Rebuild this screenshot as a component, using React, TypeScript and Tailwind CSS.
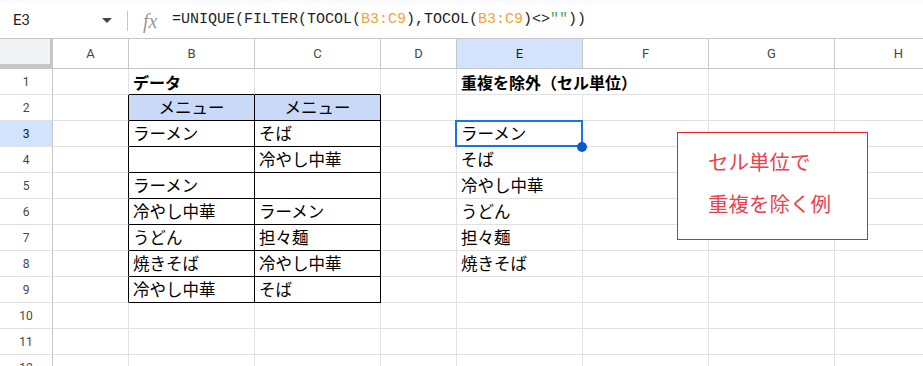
import React from "react";

const cols = ["A", "B", "C", "D", "E", "F", "G", "H"];

// row number -> cell text by column letter
const data: Record<number, Record<string, string>> = {
  1: { B: "データ", E: "重複を除外（セル単位）" },
  2: { B: "メニュー", C: "メニュー" },
  3: { B: "ラーメン", C: "そば", E: "ラーメン" },
  4: { C: "冷やし中華", E: "そば" },
  5: { B: "ラーメン", E: "冷やし中華" },
  6: { B: "冷やし中華", C: "ラーメン", E: "うどん" },
  7: { B: "うどん", C: "担々麺", E: "担々麺" },
  8: { B: "焼きそば", C: "冷やし中華", E: "焼きそば" },
  9: { B: "冷やし中華", C: "そば" },
};

const rows = Array.from({ length: 12 }, (_, i) => i + 1);

const cellClass = (col: string, row: number) => {
  const inTable = (col === "B" || col === "C") && row >= 2 && row <= 9;
  const leftOfTable = col === "A" && row >= 2 && row <= 9;
  const aboveTable = (col === "B" || col === "C") && row === 1;

  let right = "border-r-[#e1e1e1]";
  if (inTable || leftOfTable) right = "border-r-black";
  if (col === "E" && row === 1) right = "border-r-transparent";

  let bottom = "border-b-[#e1e1e1]";
  if (inTable || aboveTable) bottom = "border-b-black";

  const bg = row === 2 && inTable ? "bg-[#c9daf8] justify-center" : "pl-[4px]";
  const weight = row === 1 ? "font-bold text-[16px]" : "text-[16.5px]";

  return `relative flex items-center whitespace-nowrap border-r border-b ${right} ${bottom} ${bg} ${weight}`;
};

const FormulaBar = () => (
  <div className="h-[36px] flex items-center bg-white border-b border-[#c4c7c5]">
    <div className="w-[127px] flex items-center pl-[13px] pr-[15px]">
      <span className="flex-1 text-[15px] text-[#1f1f1f] font-['Roboto',sans-serif]">E3</span>
      <svg width="10" height="5" viewBox="0 0 10 5">
        <polygon points="0,0 10,0 5,5" fill="#444746" />
      </svg>
    </div>
    <div className="w-px h-[20px] bg-[#c4c7c5]" />
    <span className="ml-[15px] w-[29px] text-[20px] italic text-[#999999] font-['Liberation_Serif',serif] leading-none">
      fx
    </span>
    <span className="text-[15px] text-[#1f1f1f] font-['Liberation_Mono',monospace] whitespace-pre">
      =UNIQUE(FILTER(TOCOL(<span className="text-[#f4a23c]">B3:C9</span>),TOCOL(
      <span className="text-[#f4a23c]">B3:C9</span>)&lt;&gt;<span className="text-[#4f9f55]">""</span>))
    </span>
  </div>
);

export default function App() {
  return (
    <div className="relative w-[923px] h-[366px] overflow-hidden bg-white font-['Noto_Sans_CJK_JP',sans-serif] text-black">
      <div className="h-[3px] bg-[#f8fafd]" />
      <FormulaBar />

      <div className="grid grid-cols-[53px_76px_126px_126px_76px_126px_126px_126px_128px] grid-rows-[30px_repeat(12,26px)]">
        {/* column header row */}
        <div className="bg-[#f1f3f4] border-r-[3px] border-b-[5px] border-[#c4c7c5]" />
        {cols.map((c) => (
          <div
            key={c}
            className={`flex items-center justify-center border-r border-b border-r-[#c4c7c5] border-b-[#c4c7c5] text-[13px] font-['Roboto',sans-serif] ${
              c === "E" ? "bg-[#d3e3fd] text-[#041e49]" : "text-[#444746]"
            }`}
          >
            {c}
          </div>
        ))}

        {rows.map((r) => (
          <React.Fragment key={r}>
            <div
              className={`flex items-center justify-center border-r border-b border-r-[#c4c7c5] border-b-[#e1e1e1] text-[12px] font-['Roboto',sans-serif] ${
                r === 3 ? "bg-[#d3e3fd] text-[#041e49]" : "text-[#444746]"
              }`}
            >
              {r}
            </div>
            {cols.map((c) => (
              <div key={c} className={cellClass(c, r)}>
                <span className="leading-none">{data[r]?.[c] ?? ""}</span>
                {c === "E" && r === 3 && (
                  <div className="absolute z-10 left-[-2px] top-[-1px] w-[128px] h-[27px] border-2 border-[#1a73e8]">
                    <div className="absolute left-[120px] top-[20px] w-[10px] h-[10px] rounded-full bg-[#0b57d0]" />
                  </div>
                )}
              </div>
            ))}
          </React.Fragment>
        ))}
      </div>

      {/* text box drawn over the sheet */}
      <div className="absolute left-[677px] top-[132px] w-[191px] h-[108px] z-20 bg-white border border-[#e3242b] pl-[30px] pt-[7px] text-[20.5px] leading-[42px] text-[#e8434e]">
        <div>セル単位で</div>
        <div>重複を除く例</div>
      </div>
    </div>
  );
}
